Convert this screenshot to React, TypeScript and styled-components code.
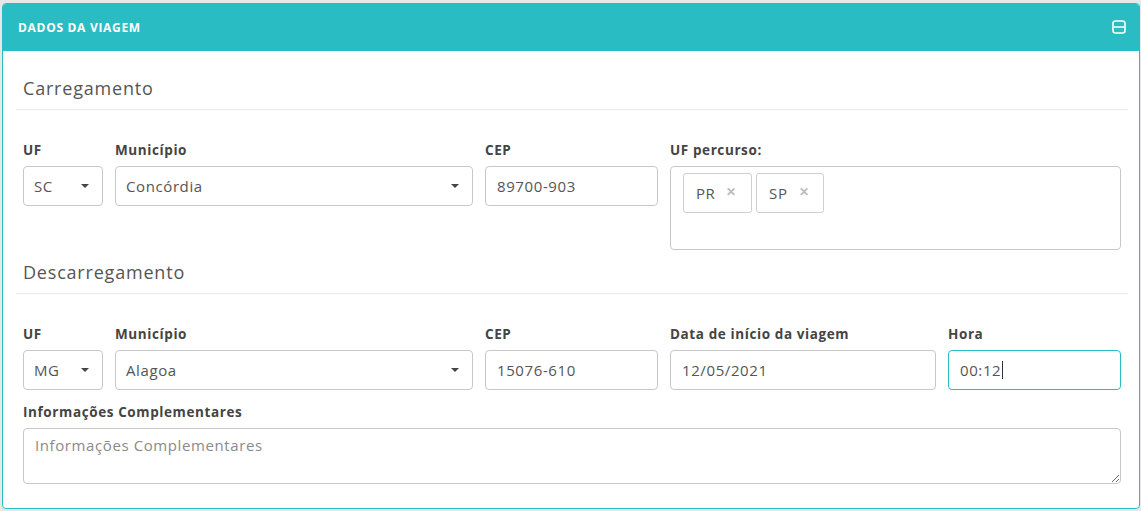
import styled, { createGlobalStyle } from "styled-components";

const GlobalStyle = createGlobalStyle`
  html, body {
    margin: 0;
    background: #e6e7e8;
  }
  body {
    padding: 3px 1px 0 2px;
    font-family: "Open Sans", "Liberation Sans", sans-serif;
  }
  * { box-sizing: border-box; }
`;

const TEAL = "#2abcc3";

// painel
const Panel = styled.section`
  background: #fff;
  border: 1px solid ${TEAL};
  border-radius: 4px;
  overflow: hidden;
`;

const PanelHeader = styled.header`
  height: 48px;
  margin: -1px -1px 0;
  background: ${TEAL};
  display: flex;
  align-items: center;
  justify-content: space-between;
  padding: 0 14px 0 16px;
`;

const PanelTitle = styled.h3`
  margin: 0;
  color: #fff;
  font-size: 12px;
  font-weight: 700;
  letter-spacing: 0.7px;
`;

const CollapseButton = styled.button`
  border: 0;
  background: none;
  padding: 0;
  width: 14px;
  height: 14px;
  display: flex;
  cursor: pointer;
`;

const PanelBody = styled.div`
  padding: 27px 11px 24px 13px;
`;

const SectionTitle = styled.h4<{ $spaced?: boolean }>`
  margin: ${({ $spaced }) => ($spaced ? "12px" : "0")} 0 0;
  padding: 0 7px 11px;
  font-size: 18px;
  line-height: 20px;
  font-weight: 400;
  color: #555;
  letter-spacing: 0.8px;
  border-bottom: 1px solid #e8e8e8;
`;

const FieldGrid = styled.div`
  margin-top: 32px;
  padding: 0 7px;
  display: grid;
  grid-template-columns: 80px 358px 173px 266px 173px;
  column-gap: 12px;
  row-gap: 14px;
`;

const Field = styled.div<{ $span?: number }>`
  display: flex;
  flex-direction: column;
  grid-column: span ${({ $span }) => $span ?? 1};
  min-width: 0;
`;

const Label = styled.label`
  font-size: 13.5px;
  line-height: 16px;
  font-weight: 700;
  color: #444;
  letter-spacing: 0.6px;
  margin-bottom: 8px;
`;

const InputWrap = styled.div`
  position: relative;
`;

const Input = styled.input<{ $focused?: boolean }>`
  display: block;
  height: 40px;
  width: 100%;
  border: 1px solid ${({ $focused }) => ($focused ? TEAL : "#c8c8c8")};
  border-radius: 4px;
  padding: 0 11px;
  font-family: inherit;
  font-size: 15px;
  letter-spacing: 0.6px;
  color: #555;
  background: #fff;
  outline: none;
  caret-color: transparent;
`;

// cursor de texto visível no campo em foco
const TextCursor = styled.span<{ $left: number }>`
  position: absolute;
  top: 11px;
  left: ${({ $left }) => $left}px;
  width: 1px;
  height: 18px;
  background: #333;
`;

const SelectBox = styled.div`
  height: 40px;
  border: 1px solid #c8c8c8;
  border-radius: 4px;
  padding: 0 11px 0 10px;
  display: flex;
  align-items: center;
  justify-content: space-between;
  font-size: 15px;
  letter-spacing: 0.6px;
  color: #555;
`;

const Caret = styled.span`
  width: 0;
  height: 0;
  border-left: 4px solid transparent;
  border-right: 4px solid transparent;
  border-top: 4px solid #444;
  margin-right: 2px;
`;

const TagBox = styled.div`
  height: 84px;
  border: 1px solid #c8c8c8;
  border-radius: 4px;
  padding: 6px 12px;
  display: flex;
  align-items: flex-start;
  gap: 4px;
`;

const Tag = styled.span`
  height: 40px;
  border: 1px solid #cfcfcf;
  border-radius: 3px;
  padding: 0 14px 0 12px;
  display: inline-flex;
  align-items: center;
  gap: 11px;
  font-size: 15px;
  letter-spacing: 0.6px;
  color: #555;
`;

const TagRemove = styled.span`
  font-size: 12px;
  font-weight: 700;
  color: #bbb;
  margin-top: -4px;
`;

const TextArea = styled.textarea`
  height: 56px;
  border: 1px solid #c8c8c8;
  border-radius: 4px;
  padding: 6px 11px;
  font-family: inherit;
  font-size: 15px;
  letter-spacing: 0.6px;
  color: #555;
  outline: none;
  &::placeholder { color: #8a8a8a; }
`;

function Select({ value }: { value: string }) {
  return (
    <SelectBox>
      <span>{value}</span>
      <Caret />
    </SelectBox>
  );
}

export default function App() {
  return (
    <>
      <GlobalStyle />
      <Panel>
        <PanelHeader>
          <PanelTitle>DADOS DA VIAGEM</PanelTitle>
          <CollapseButton aria-label="Recolher">
            <svg width="14" height="14" viewBox="0 0 14 14" fill="none">
              <rect x="1" y="1" width="12" height="12" rx="2.5" stroke="#fff" strokeWidth="1.6" />
              <line x1="1.5" y1="7" x2="12.5" y2="7" stroke="#fff" strokeWidth="1.6" />
            </svg>
          </CollapseButton>
        </PanelHeader>

        <PanelBody>
          {/* carregamento */}
          <SectionTitle>Carregamento</SectionTitle>
          <FieldGrid>
            <Field>
              <Label>UF</Label>
              <Select value="SC" />
            </Field>
            <Field>
              <Label>Município</Label>
              <Select value="Concórdia" />
            </Field>
            <Field>
              <Label>CEP</Label>
              <Input defaultValue="89700-903" />
            </Field>
            <Field $span={2}>
              <Label>UF percurso:</Label>
              <TagBox>
                <Tag>PR<TagRemove>✕</TagRemove></Tag>
                <Tag>SP<TagRemove>✕</TagRemove></Tag>
              </TagBox>
            </Field>
          </FieldGrid>

          {/* descarregamento */}
          <SectionTitle $spaced>Descarregamento</SectionTitle>
          <FieldGrid>
            <Field>
              <Label>UF</Label>
              <Select value="MG" />
            </Field>
            <Field>
              <Label>Município</Label>
              <Select value="Alagoa" />
            </Field>
            <Field>
              <Label>CEP</Label>
              <Input defaultValue="15076-610" />
            </Field>
            <Field>
              <Label>Data de início da viagem</Label>
              <Input defaultValue="12/05/2021" />
            </Field>
            <Field>
              <Label>Hora</Label>
              <InputWrap>
                <Input $focused defaultValue="00:12" />
                <TextCursor $left={54} />
              </InputWrap>
            </Field>
            <Field $span={5}>
              <Label>Informações Complementares</Label>
              <TextArea placeholder="Informações Complementares" />
            </Field>
          </FieldGrid>
        </PanelBody>
      </Panel>
    </>
  );
}
